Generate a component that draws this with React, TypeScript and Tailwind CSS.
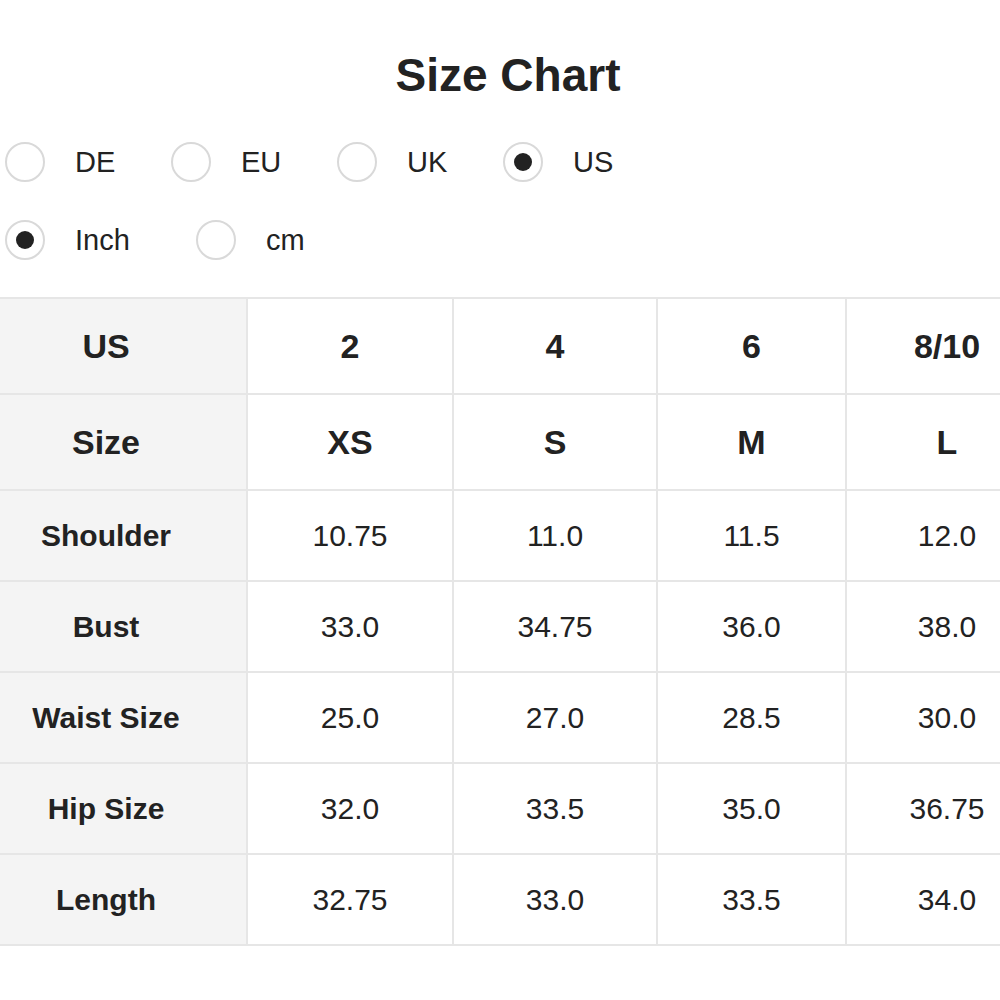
const regions = ['DE', 'EU', 'UK', 'US'];

const sizes = ['2', '4', '6', '8/10'];
const letters = ['XS', 'S', 'M', 'L'];
const rows: [string, string[]][] = [
  ['Shoulder', ['10.75', '11.0', '11.5', '12.0']],
  ['Bust', ['33.0', '34.75', '36.0', '38.0']],
  ['Waist Size', ['25.0', '27.0', '28.5', '30.0']],
  ['Hip Size', ['32.0', '33.5', '35.0', '36.75']],
  ['Length', ['32.75', '33.0', '33.5', '34.0']],
];

function Radio({ label, checked, className }: { label: string; checked?: boolean; className: string }) {
  return (
    <label className={`flex items-center ${className}`}>
      <span className="flex h-10 w-10 shrink-0 items-center justify-center rounded-full border-2 border-[#d9d9d9] bg-white">
        {checked && <span className="h-[18px] w-[18px] rounded-full bg-[#222]" />}
      </span>
      <span className="ml-[30px] text-[29px] leading-none text-[#222]">{label}</span>
    </label>
  );
}

export default function App() {
  return (
    <div
      className="w-[1000px] h-[1000px] overflow-hidden bg-white text-[#222]"
      style={{ fontFamily: '"Liberation Sans", Arial, sans-serif' }}
    >
      <h1 className="pt-[52px] text-center text-[46px] font-bold leading-none h-[98px] pl-4">Size Chart</h1>

      <div className="mt-[44px] flex pl-[5px] h-10">
        {regions.map((r) => (
          <Radio key={r} label={r} checked={r === 'US'} className="w-[166px]" />
        ))}
      </div>
      <div className="mt-[38px] flex pl-[5px] h-10">
        <Radio label="Inch" checked className="w-[191px]" />
        <Radio label="cm" className="w-[166px]" />
      </div>

      <table className="mt-[37px] w-[1048px] table-fixed border-collapse">
        <colgroup>
          <col className="w-[247px]" />
          <col className="w-[206px]" />
          <col className="w-[204px]" />
          <col className="w-[189px]" />
          <col className="w-[202px]" />
        </colgroup>
        <tbody>
          <tr className="h-[96px]">
            <th className="border-2 border-l-0 border-[#e6e6e6] bg-[#f4f4f4] pr-[34px] text-[34px] font-bold">US</th>
            {sizes.map((s) => (
              <td key={s} className="border-2 border-[#e6e6e6] text-center text-[34px] font-bold">{s}</td>
            ))}
          </tr>
          <tr className="h-[96px]">
            <th className="border-2 border-l-0 border-[#e6e6e6] bg-[#f4f4f4] pr-[34px] text-[34px] font-bold">Size</th>
            {letters.map((s) => (
              <td key={s} className="border-2 border-[#e6e6e6] text-center text-[34px] font-bold">{s}</td>
            ))}
          </tr>
          {rows.map(([name, vals]) => (
            <tr key={name} className="h-[91px]">
              <th className="border-2 border-l-0 border-[#e6e6e6] bg-[#f4f4f4] pr-[34px] text-[30px] font-bold">{name}</th>
              {vals.map((v, i) => (
                <td key={i} className="border-2 border-[#e6e6e6] text-center text-[30px]">{v}</td>
              ))}
            </tr>
          ))}
        </tbody>
      </table>
    </div>
  );
}
